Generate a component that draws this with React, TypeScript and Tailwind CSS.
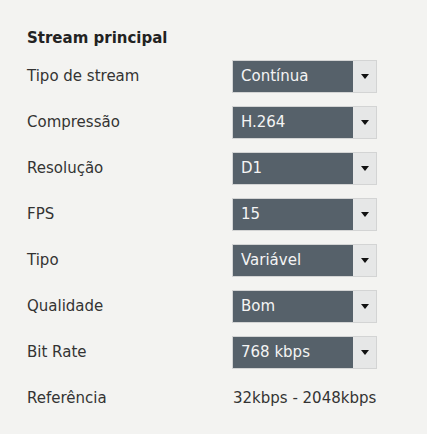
import React from "react";

const rows: [string, string][] = [
  ["Tipo de stream", "Contínua"],
  ["Compressão", "H.264"],
  ["Resolução", "D1"],
  ["FPS", "15"],
  ["Tipo", "Variável"],
  ["Qualidade", "Bom"],
  ["Bit Rate", "768 kbps"],
];

function Select({ value }: { value: string }) {
  return (
    <div className="flex h-[33px] w-[145px] border border-[#d3d4d4] bg-[#e8e8e8]">
      <div className="flex flex-1 items-center bg-[#56616a] pl-[8px] text-[15px] text-[#f4f4f4]">
        {value}
      </div>
      <div className="flex w-[23px] items-center justify-center bg-[#e6e7e7]">
        <svg width="8" height="5" viewBox="0 0 8 5">
          <path d="M0 0 L8 0 L4 5 Z" fill="#111" />
        </svg>
      </div>
    </div>
  );
}

export default function App() {
  return (
    <div
      className="h-[434px] w-[427px] bg-[#f3f3f1] pl-[27px] pt-[28px] text-[#333]"
      style={{ fontFamily: '"DejaVu Sans", sans-serif' }}
    >
      <div className="mb-[12px] text-[15px] font-bold leading-[20px] text-[#222]">
        Stream principal
      </div>
      <div className="flex flex-col gap-[13px]">
        {rows.map(([label, value]) => (
          <div key={label} className="flex items-center">
            <div className="w-[205px] text-[15px]">{label}</div>
            <Select value={value} />
          </div>
        ))}
        <div className="flex h-[33px] items-center">
          <div className="w-[205px] text-[15px]">Referência</div>
          <div className="pl-[1px] text-[15px]">32kbps - 2048kbps</div>
        </div>
      </div>
    </div>
  );
}
